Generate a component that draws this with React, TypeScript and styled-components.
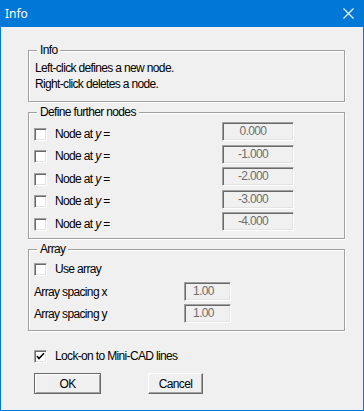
import React from 'react';
import styled, { createGlobalStyle } from 'styled-components';

const GlobalStyle = createGlobalStyle`
  html, body {
    margin: 0;
    padding: 0;
    background: #f0f0f0;
  }
  body {
    font-family: "Liberation Sans", Arial, sans-serif;
    font-size: 12px;
    letter-spacing: -0.65px;
    color: #000;
  }
`;

const Window = styled.div`
  width: 364px;
  height: 411px;
  box-sizing: border-box;
  border: 1px solid #0078d7;
  border-top: none;
  background: #f0f0f0;
  display: flex;
  flex-direction: column;
`;

const TitleBar = styled.div`
  height: 26px;
  margin: 0 -1px;
  background: #0078d7;
  color: #fff;
  display: flex;
  align-items: center;
  justify-content: space-between;
  padding: 0 10px 1px 5px;
  font-family: "Noto Sans", "Open Sans", sans-serif;
  font-size: 12px;
  letter-spacing: 0;
`;

const Body = styled.div`
  padding: 23px 0 0 27px;
  display: flex;
  flex-direction: column;
`;

const Group = styled.div<{ $mt?: number; $pad: string }>`
  position: relative;
  width: 317px;
  box-sizing: border-box;
  margin-top: ${(p) => p.$mt ?? 0}px;
  padding: ${(p) => p.$pad};
  border: 1px solid #a0a0a0;
  box-shadow: 1px 1px 0 #fff, inset 1px 1px 0 #fff;
  display: flex;
  flex-direction: column;
`;

const Legend = styled.span`
  position: absolute;
  top: -7px;
  left: 8px;
  padding: 0 3px 0 3px;
  background: #f0f0f0;
  line-height: 13px;
`;

const InfoText = styled.div`
  line-height: 16px;
`;

const Rows = styled.div<{ $gap: number }>`
  display: flex;
  flex-direction: column;
  gap: ${(p) => p.$gap}px;
`;

const Row = styled.div<{ $labelCol: number }>`
  display: grid;
  grid-template-columns: ${(p) => p.$labelCol}px 72px;
  align-items: center;
  height: 19px;
`;

const CheckLabel = styled.label<{ $drop?: number }>`
  display: flex;
  align-items: center;
  gap: 8px;
  margin-top: ${(p) => p.$drop ?? 0}px;
  line-height: 13px;
`;

const Box = styled.span`
  width: 13px;
  height: 13px;
  box-sizing: border-box;
  background: #fff;
  border-top: 1px solid #a0a0a0;
  border-left: 1px solid #a0a0a0;
  border-right: 1px solid #fff;
  border-bottom: 1px solid #fff;
  box-shadow: inset 1px 1px 0 #696969, inset -1px -1px 0 #e3e3e3;
  display: flex;
  align-items: center;
  justify-content: center;
  flex-shrink: 0;
`;

const Field = styled.div`
  width: 72px;
  height: 19px;
  box-sizing: border-box;
  border-top: 1px solid #a0a0a0;
  border-left: 1px solid #a0a0a0;
  border-right: 1px solid #fff;
  border-bottom: 1px solid #fff;
  box-shadow: inset 1px 1px 0 #696969, inset -1px -1px 0 #e3e3e3;
  color: #6d6d6d;
  text-align: center;
  padding-right: 10px;
  line-height: 17px;
`;

const SmallField = styled(Field)`
  width: 47px;
  padding-right: 8px;
`;

const Lock = styled.div`
  margin: 19px 0 0 6px;
`;

const Buttons = styled.div`
  display: flex;
  gap: 47px;
  margin: 10px 0 0 6px;
`;

const Button = styled.button<{ $w: number; $default?: boolean }>`
  width: ${(p) => p.$w}px;
  height: 21px;
  box-sizing: border-box;
  padding: 0;
  font-family: inherit;
  font-size: 12px;
  letter-spacing: -0.65px;
  color: #000;
  background: #f0f0f0;
  border: 1px solid ${(p) => (p.$default ? '#6a6a6a' : '#fff')};
  border-right-color: #696969;
  border-bottom-color: #696969;
  box-shadow: ${(p) =>
    p.$default
      ? 'inset 1px 1px 0 #fff, inset -1px -1px 0 #a0a0a0'
      : 'inset -1px -1px 0 #a0a0a0'};
`;

const Italic = styled.i`
  font-style: italic;
`;

const CloseIcon = () => (
  <svg width="11" height="11" viewBox="0 0 11 11">
    <path d="M0.5 0.5 L10.5 10.5 M10.5 0.5 L0.5 10.5" stroke="#fff" strokeWidth="1.1" />
  </svg>
);

const Check = ({ checked }: { checked?: boolean }) => (
  <Box>
    {checked && (
      <svg width="9" height="9" viewBox="0 0 9 9">
        <path d="M1 4 L3 6.5 L8 1.2" stroke="#000" strokeWidth="1.6" fill="none" />
      </svg>
    )}
  </Box>
);

const nodes = ['0.000', '-1.000', '-2.000', '-3.000', '-4.000'];

export default function App() {
  return (
    <>
      <GlobalStyle />
      <Window>
        <TitleBar>
          <span>Info</span>
          <CloseIcon />
        </TitleBar>
        <Body>
          <Group $pad="9px 0 9px 6px">
            <Legend>Info</Legend>
            <InfoText>Left-click defines a new node.</InfoText>
            <InfoText>Right-click deletes a node.</InfoText>
          </Group>

          <Group $mt={10} $pad="9px 0 7px 5px">
            <Legend>Define further nodes</Legend>
            <Rows $gap={3.5}>
              {nodes.map((v) => (
                <Row key={v} $labelCol={188}>
                  <CheckLabel $drop={5}>
                    <Check />
                    <span>
                      Node at <Italic>y</Italic> =
                    </span>
                  </CheckLabel>
                  <Field>{v}</Field>
                </Row>
              ))}
            </Rows>
          </Group>

          <Group $mt={10} $pad="10px 0 7px 5px">
            <Legend>Array</Legend>
            <Rows $gap={3}>
              <Row $labelCol={188}>
                <CheckLabel>
                  <Check />
                  <span>Use array</span>
                </CheckLabel>
              </Row>
              <Row $labelCol={150}>
                <span>Array spacing x</span>
                <SmallField>1.00</SmallField>
              </Row>
              <Row $labelCol={150}>
                <span>Array spacing y</span>
                <SmallField>1.00</SmallField>
              </Row>
            </Rows>
          </Group>

          <Lock>
            <CheckLabel>
              <Check checked />
              <span>Lock-on to Mini-CAD lines</span>
            </CheckLabel>
          </Lock>

          <Buttons>
            <Button $w={67} $default>OK</Button>
            <Button $w={55}>Cancel</Button>
          </Buttons>
        </Body>
      </Window>
    </>
  );
}
